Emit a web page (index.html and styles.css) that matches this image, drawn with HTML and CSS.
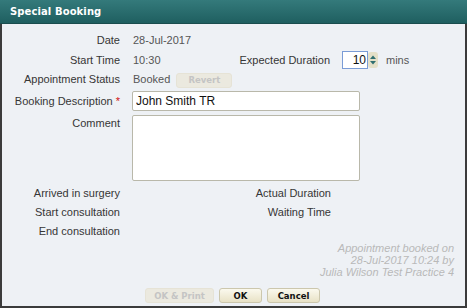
FILE: index.html
```html
<!DOCTYPE html>
<html lang="en">
<head>
    <meta name="viewport" content="width=device-width, initial-scale=1.0">
    <title>Special Booking</title>
    <link rel="stylesheet" href="styles.css">
</head>
<body>
    <div class="dialog">
        <header class="title-bar">Special Booking</header>
        <section class="content">
            <div class="row row-date">
                <span class="label">Date</span>
                <span class="value">28-Jul-2017</span>
            </div>
            <div class="row row-time">
                <span class="label">Start Time</span>
                <span class="value short">10:30</span>
                <span class="label label-right">Expected Duration</span>
                <div class="spin">
                    <input class="spin-input" type="text" value="10">
                    <span class="spin-btns">
                        <svg width="10" height="16" viewBox="0 0 10 16">
                            <path d="M2 7 L5 3.5 L8 7 Z" fill="#2f6f70"/>
                            <path d="M2 9 L5 12.5 L8 9 Z" fill="#2f6f70"/>
                        </svg>
                    </span>
                </div>
                <span class="value mins">mins</span>
            </div>
            <div class="row row-status">
                <span class="label">Appointment Status</span>
                <span class="value">Booked</span>
                <button class="btn btn-revert" disabled>Revert</button>
            </div>
            <div class="row row-desc">
                <span class="label">Booking Description <span class="req">*</span></span>
                <input class="text-input" type="text" value="John Smith TR">
            </div>
            <div class="row row-comment">
                <span class="label">Comment</span>
                <textarea class="comment"></textarea>
            </div>
            <div class="row row-small">
                <span class="label">Arrived in surgery</span>
                <span class="label label-right wide">Actual Duration</span>
            </div>
            <div class="row row-small">
                <span class="label">Start consultation</span>
                <span class="label label-right wide">Waiting Time</span>
            </div>
            <div class="row row-small">
                <span class="label">End consultation</span>
            </div>
            <div class="note">
                Appointment booked on<br>
                28-Jul-2017 10:24 by<br>
                Julia Wilson Test Practice 4
            </div>
            <div class="buttons">
                <button class="btn btn-print" disabled>OK &amp; Print</button>
                <button class="btn btn-ok">OK</button>
                <button class="btn btn-cancel">Cancel</button>
            </div>
        </section>
    </div>
</body>
</html>
```

FILE: styles.css
```css
* {
    margin: 0;
    padding: 0;
    box-sizing: border-box;
}
body {
    width: 467px;
    height: 308px;
    font-family: "Liberation Sans", Arial, sans-serif;
    font-size: 11px;
    background: #eef1f5;
}
.dialog {
    width: 467px;
    height: 308px;
    border: 2px solid #3b3b3b;
    border-top: none;
    background: #eef1f5;
    display: flex;
    flex-direction: column;
}
.title-bar {
    height: 24px;
    margin: 0 -2px;
    padding-left: 10px;
    line-height: 23px;
    color: #fff;
    font-family: "DejaVu Sans", Verdana, sans-serif;
    font-weight: bold;
    font-size: 10px;
    letter-spacing: 0.1px;
    background: linear-gradient(#347a7b, #1f5f60);
    border-bottom: 1px solid #1a4d4e;
}
.content {
    flex: 1;
    padding-top: 6px;
    display: flex;
    flex-direction: column;
}
.row {
    display: flex;
    align-items: center;
    height: 20px;
}
.row-time {
    height: 19px;
}
.label {
    width: 118px;
    flex: none;
    text-align: right;
    color: #363636;
    white-space: nowrap;
}
.value {
    margin-left: 13px;
    color: #555;
}
.value.short {
    width: 94px;
}
.label-right {
    width: 103px;
}
.label-right.wide {
    width: 211px;
}
.req {
    color: #d01010;
}
.spin {
    display: flex;
    align-items: center;
    margin-left: 12px;
}
.spin-input {
    width: 26px;
    height: 18px;
    border: 1px solid #7a9cd6;
    background: #fff;
    font-family: inherit;
    font-size: 12px;
    text-align: right;
    padding-right: 1px;
    color: #111;
    outline: none;
}
.spin-btns {
    width: 10px;
    height: 16px;
    background: #e4e0c8;
    border-radius: 3px;
    display: flex;
}
.mins {
    margin-left: 8px;
}
.btn {
    font-family: "DejaVu Sans", Verdana, sans-serif;
    font-size: 8.5px;
    font-weight: bold;
    height: 15px;
    border: 1px solid #ccc7ad;
    border-radius: 3px;
    background: linear-gradient(#fbf9ee, #e8e2c6);
    color: #111;
}
.btn[disabled] {
    color: #c4c4c4;
    background: #ebe9df;
    border-color: #e6e3d6;
}
.btn-revert {
    width: 56px;
    margin-left: 6px;
    margin-top: 2px;
}
.row-desc {
    margin-top: 2px;
    height: 20px;
}
.text-input {
    width: 228px;
    height: 20px;
    margin-left: 12px;
    border: 1px solid #b9b8aa;
    border-radius: 2px;
    background: #fff;
    font-family: inherit;
    font-size: 12px;
    padding-left: 3px;
    color: #111;
    outline: none;
}
.row-comment {
    margin-top: 4px;
    height: 66px;
    align-items: flex-start;
}
.row-comment .label {
    margin-top: 2px;
}
.comment {
    width: 228px;
    height: 66px;
    margin-left: 12px;
    border: 1px solid #b9b8aa;
    border-radius: 2px;
    background: #fff;
    resize: none;
}
.row-small {
    height: 19px;
}
.row-comment + .row-small {
    margin-top: 2px;
}
.note {
    margin-top: 2px;
    padding-right: 11px;
    text-align: right;
    font-size: 11px;
    font-style: italic;
    line-height: 12px;
    color: #b9b9b9;
}
.buttons {
    display: flex;
    justify-content: center;
    gap: 5px;
    margin-top: 10px;
    padding-right: 2px;
}
.btn-print {
    width: 69px;
}
.btn-ok {
    width: 43px;
}
.btn-cancel {
    width: 53px;
}
```
